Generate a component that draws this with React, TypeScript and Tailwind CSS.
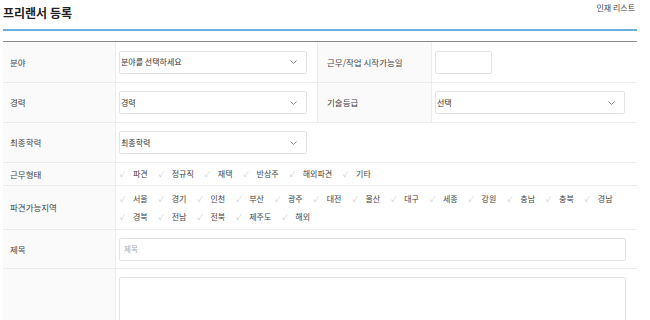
import React from 'react';

const font = { fontFamily: '"Noto Sans CJK KR", "Noto Sans", sans-serif' };

const Chevron: React.FC = () => (
  <svg width="7" height="4" viewBox="0 0 7 4" className="shrink-0">
    <polyline points="0.5,0.5 3.5,3.5 6.5,0.5" fill="none" stroke="#888" strokeWidth="1" />
  </svg>
);

const Select: React.FC<{ value: string; width: string }> = ({ value, width }) => (
  <div className={`${width} h-[23px] flex items-center justify-between border border-[#e3e3e3] rounded-[2px] bg-white pl-[1px] pr-[9px]`}>
    <span className="text-[8px] text-[#333] leading-none">{value}</span>
    <Chevron />
  </div>
);

const Label: React.FC<{ text: string; className?: string }> = ({ text, className = '' }) => (
  <div className={`flex items-center bg-[#fafafa] border-r border-[#ececec] pl-[7px] text-[8.5px] text-[#444] ${className}`}>
    {text}
  </div>
);

const Check: React.FC<{ text: string }> = ({ text }) => (
  <div className="flex items-center mr-[11px]">
    <span className="text-[7.5px] text-[#cacaca] w-[8px] leading-none">✓</span>
    <span className="ml-[5px] text-[8px] text-[#444] leading-none">{text}</span>
  </div>
);

const workTypes = ['파견', '정규직', '재택', '반상주', '해외파견', '기타'];
const regions1 = ['서울', '경기', '인천', '부산', '광주', '대전', '울산', '대구', '세종', '강원', '충남', '충북', '경남'];
const regions2 = ['경북', '전남', '전북', '제주도', '해외'];

export default function App() {
  return (
    <div className="w-[650px] h-[320px] bg-white overflow-hidden" style={font}>
      <div className="w-[634px] ml-[3px]">
        {/* header */}
        <div className="h-[29px] flex justify-between">
          <div className="pt-[5px] text-[12px] leading-[16px] font-bold text-[#222]">프리랜서 등록</div>
          <div className="pt-[3px] pr-[2px] text-[8px] leading-[10px] text-[#444]">인재 리스트</div>
        </div>
        <div className="h-[2px] bg-[#6cb0e0]" />
        <div className="h-[10px]" />

        <div className="border-t border-[#888]">
          {/* 분야 / 근무 시작일 */}
          <div className="h-[41px] flex border-b border-[#ececec]">
            <Label text="분야" className="w-[113px]" />
            <div className="w-[201px] flex items-center pl-[3px]">
              <Select value="분야를 선택하세요" width="w-[188px]" />
            </div>
            <Label text="근무/작업 시작가능일" className="w-[115px] border-l pl-[9px]" />
            <div className="flex-1 flex items-center pl-[3px]">
              <div className="w-[57px] h-[23px] border border-[#e3e3e3] rounded-[2px]" />
            </div>
          </div>

          {/* 경력 / 기술등급 */}
          <div className="h-[40px] flex border-b border-[#ececec]">
            <Label text="경력" className="w-[113px]" />
            <div className="w-[201px] flex items-center pl-[3px]">
              <Select value="경력" width="w-[188px]" />
            </div>
            <Label text="기술등급" className="w-[115px] border-l pl-[9px]" />
            <div className="flex-1 flex items-center pl-[3px]">
              <Select value="선택" width="w-[190px]" />
            </div>
          </div>

          {/* 최종학력 */}
          <div className="h-[40px] flex border-b border-[#ececec]">
            <Label text="최종학력" className="w-[113px]" />
            <div className="flex-1 flex items-center pl-[3px]">
              <Select value="최종학력" width="w-[188px]" />
            </div>
          </div>

          {/* 근무형태 */}
          <div className="h-[23px] flex border-b border-[#ececec]">
            <Label text="근무형태" className="w-[113px]" />
            <div className="flex-1 flex items-center pl-[4px]">
              {workTypes.map((t) => (
                <Check key={t} text={t} />
              ))}
            </div>
          </div>

          {/* 파견가능지역 */}
          <div className="h-[44px] flex border-b border-[#ececec]">
            <Label text="파견가능지역" className="w-[113px]" />
            <div className="flex-1 flex flex-col justify-center gap-[10px] pl-[4px]">
              <div className="flex">
                {regions1.map((t) => (
                  <Check key={t} text={t} />
                ))}
              </div>
              <div className="flex">
                {regions2.map((t) => (
                  <Check key={t} text={t} />
                ))}
              </div>
            </div>
          </div>

          {/* 제목 */}
          <div className="h-[39px] flex border-b border-[#ececec]">
            <Label text="제목" className="w-[113px]" />
            <div className="flex-1 flex items-center pl-[3px]">
              <div className="w-[507px] h-[23px] flex items-center border border-[#e3e3e3] rounded-[2px] pl-[4px]">
                <span className="text-[7.5px] text-[#aaa] leading-none">제목</span>
              </div>
            </div>
          </div>

          {/* 내용 */}
          <div className="h-[80px] flex">
            <Label text="" className="w-[113px]" />
            <div className="flex-1 pl-[3px] pt-[8px]">
              <div className="w-[507px] h-[80px] border border-[#e3e3e3] rounded-[2px]" />
            </div>
          </div>
        </div>
      </div>
    </div>
  );
}
